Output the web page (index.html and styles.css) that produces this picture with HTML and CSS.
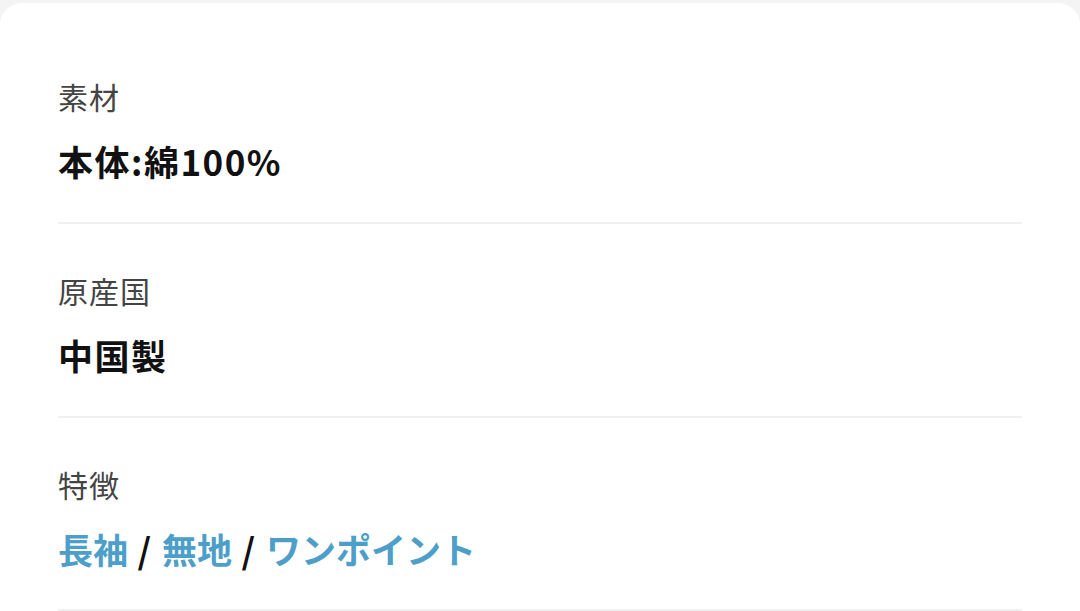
FILE: index.html
```html
<!DOCTYPE html>
<html lang="ja">
<head>
    <meta charset="utf-8">
    <title>商品詳細</title>
    <link rel="stylesheet" href="styles.css">
</head>
<body>
    <div class="card">
        <div class="spec">
            <div class="spec-label">素材</div>
            <div class="spec-value">本体:綿100%</div>
        </div>
        <div class="spec">
            <div class="spec-label">原産国</div>
            <div class="spec-value">中国製</div>
        </div>
        <div class="spec">
            <div class="spec-label">特徴</div>
            <div class="spec-value">
                <a class="tag" href="#">長袖</a> / <a class="tag" href="#">無地</a> / <a class="tag" href="#">ワンポイント</a>
            </div>
        </div>
    </div>
</body>
</html>
```

FILE: styles.css
```css
html, body {
    margin: 0;
    padding: 0;
}

body {
    background: #f4f4f4;
    font-family: "Noto Sans CJK JP", "Noto Sans", sans-serif;
    padding-top: 3px;
}

.card {
    box-sizing: border-box;
    min-height: calc(100vh - 3px);
    background: #ffffff;
    border-radius: 22px 22px 0 0;
    padding: 73px 58px 0 58px;
}

.spec {
    padding: 46px 0 39px 0;
    border-bottom: 2px solid #f0f0f0;
}

.spec:first-child {
    padding-top: 0;
}

.spec:last-child {
    padding-bottom: 38px;
}

.spec-label {
    font-size: 30px;
    line-height: 40px;
    letter-spacing: 1px;
    color: #444;
}

.spec-value {
    margin-top: 23px;
    font-size: 35px;
    line-height: 44px;
    letter-spacing: 1.5px;
    font-weight: bold;
    color: #111;
}

.tag {
    color: #4d9fca;
    letter-spacing: 0;
    text-decoration: none;
}
```
